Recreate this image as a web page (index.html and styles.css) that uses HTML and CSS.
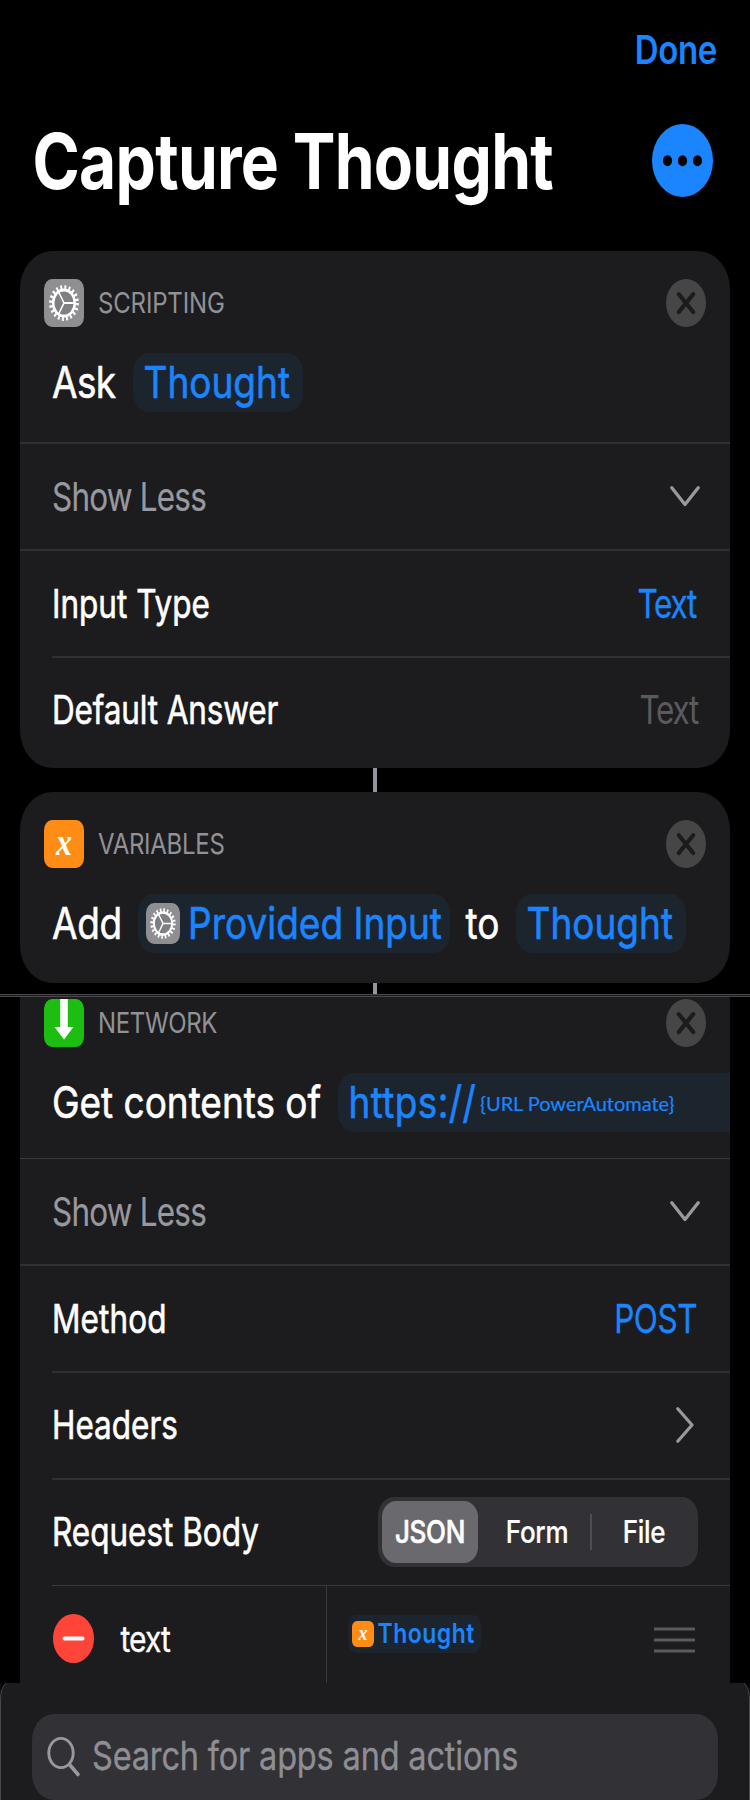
FILE: index.html
```html
<!DOCTYPE html>
<html lang="en">
<head>
<meta charset="utf-8">
<title>Capture Thought</title>
<link rel="stylesheet" href="styles.css">
</head>
<body>
<svg class="defs" width="0" height="0">
  <symbol id="gear" viewBox="0 0 40 40" preserveAspectRatio="none">
    <g fill="none" stroke="#fff">
      <circle cx="20" cy="20" r="10.8" stroke-width="2.4" fill="#7e7e83"/>
      <circle cx="20" cy="20" r="13.2" stroke-width="3.4" stroke-dasharray="1.9 2.247"/>
      <path d="M20 20H30.500M20 20L14.700 10.900M20 20L14.700 29.100" stroke-width="1.500"/>
    </g>
  </symbol>
  <symbol id="close" viewBox="0 0 40 48">
    <ellipse cx="20" cy="24" rx="20" ry="24" fill="#464646"/>
    <path d="M12.800 15.200L27.200 33M27.200 15.200L12.800 33" stroke="#1c1c1e" stroke-width="4.200" stroke-linecap="round"/>
  </symbol>
  <symbol id="down" viewBox="0 0 30 21">
    <path d="M1.800 1.800L15 18.500L28.200 1.800" fill="none" stroke="#98989e" stroke-width="3.300" stroke-linecap="round" stroke-linejoin="round"/>
  </symbol>
</svg>
<div class="screen">
  <div class="nav"><span class="t done">Done</span></div>
  <div class="heading">
    <h1 class="t title">Capture Thought</h1>
    <svg class="more" viewBox="0 0 61 73"><ellipse cx="30.500" cy="36.500" rx="30.500" ry="36.500" fill="#1a85ff"/><g fill="#000"><ellipse cx="15.500" cy="36.700" rx="4.600" ry="5.500"/><ellipse cx="30.500" cy="36.700" rx="4.600" ry="5.500"/><ellipse cx="45.500" cy="36.700" rx="4.600" ry="5.500"/></g></svg>
  </div>

  <section class="card first">
    <header class="head">
      <span class="icon gray"><svg><use href="#gear"/></svg></span>
      <span class="t cat">SCRIPTING</span>
      <svg class="close"><use href="#close"/></svg>
    </header>
    <div class="action">
      <span class="t ask">Ask</span>
      <span class="pill pill-ask"><span class="t thought">Thought</span></span>
    </div>
    <div class="row"><span class="t label muted show">Show Less</span><svg class="down"><use href="#down"/></svg></div>
    <div class="row"><span class="t label">Input Type</span><span class="t label value vtext">Text</span></div>
    <div class="row inset last"><span class="t label answer">Default Answer</span><span class="t label value vtext placeholder">Text</span></div>
  </section>
  <div class="link"></div>
  <section class="card second">
    <header class="head">
      <span class="icon orange"><span class="t x">x</span></span>
      <span class="t cat vars">VARIABLES</span>
      <svg class="close"><use href="#close"/></svg>
    </header>
    <div class="action">
      <span class="t add">Add</span>
      <span class="pill pill-input"><span class="mini gray"><svg><use href="#gear"/></svg></span><span class="t">Provided Input</span></span>
      <span class="t to">to</span>
      <span class="pill pill-thought"><span class="t thought">Thought</span></span>
    </div>
  </section>
  <div class="link short"></div>
  <div class="seam"></div>
  <section class="card third">
    <header class="head">
      <span class="icon green"><svg viewBox="0 0 40 48"><path d="M16.200 0H23.800V28H29.500L20 40.500L10.500 28H16.200Z" fill="#fff"/></svg></span>
      <span class="t cat net">NETWORK</span>
      <svg class="close"><use href="#close"/></svg>
    </header>
    <div class="action">
      <span class="t get">Get contents of</span>
      <span class="pill pill-url"><span class="t https">https://</span><span class="url">{URL PowerAutomate}</span></span>
    </div>
    <div class="row thin"><span class="t label muted show">Show Less</span><svg class="down"><use href="#down"/></svg></div>
    <div class="row"><span class="t label method">Method</span><span class="t label value post">POST</span></div>
    <div class="row inset raised"><span class="t label">Headers</span><svg class="right" viewBox="0 0 18 36"><path d="M1.800 1.800L16 18L1.800 34.200" fill="none" stroke="#98989e" stroke-width="3.200" stroke-linecap="round" stroke-linejoin="round"/></svg></div>
    <div class="row inset raised"><span class="t label">Request Body</span>
      <div class="segments"><span class="seg on"><span class="t">JSON</span></span><span class="seg form"><span class="t">Form</span></span><i class="split"></i><span class="seg file"><span class="t">File</span></span></div>
    </div>
    <div class="row inset thin field">
      <div class="key"><svg class="minus" viewBox="0 0 41 49"><ellipse cx="20.500" cy="24.500" rx="20.500" ry="24.500" fill="#ff453a"/><path d="M11.500 24.500H29.500" stroke="#fff" stroke-width="4" stroke-linecap="round"/></svg><span class="t keyname">text</span></div>
      <div class="val"><span class="token"><span class="tiny orange"><span class="t x">x</span></span><span class="t token-name">Thought</span></span>
        <svg class="grip" viewBox="0 0 41 26"><path d="M1 2H40M1 13H40M1 24H40" stroke="#5b5b5e" stroke-width="3" stroke-linecap="round"/></svg></div>
    </div>
  </section>
  <footer class="sheet">
    <svg class="edge" viewBox="0 0 750 117"><path d="M0 0H6Q.5 5 .5 17V0Z" fill="#000"/><path d="M750 0H744Q749.500 5 749.500 17V0Z" fill="#000"/><path d="M6 0Q.5 5 .5 17V117M744 0Q749.500 5 749.500 17V117" fill="none" stroke="#48484a"/></svg>
    <div class="search"><svg class="lens" viewBox="0 0 34 42"><g fill="none" stroke="#98989f" stroke-linecap="round"><ellipse cx="14" cy="17" rx="12.200" ry="14.600" stroke-width="2.900"/><path d="M22.500 28.500L31 38.500" stroke-width="3.600"/></g></svg><span class="t hint">Search for apps and actions</span></div>
  </footer>
</div>
</body>
</html>
```
FILE: styles.css
```css
* { box-sizing: border-box; }
body { margin: 0; background: #000; }
.defs { position: absolute; }
svg { display: block; flex: none; }
.screen {
  width: 750px; height: 1800px; overflow: hidden;
  display: flex; flex-direction: column;
  font-family: Inter, "Liberation Sans", sans-serif;
  background: #000; color: #fff;
}
/* Tall type: every label is stretched vertically around its centre. */
.t { display: inline-block; flex: none; transform: scaleY(1.2); white-space: nowrap; line-height: 1.2; }

.nav { height: 98px; display: flex; align-items: center; justify-content: flex-end; padding: 3px 33px 0 0; }
.done { color: #1a85ff; font-size: 33px; font-weight: 600; letter-spacing: -.35px; }
.heading { height: 153px; display: flex; justify-content: space-between; align-items: flex-start; padding: 26px 37px 0 32.500px; }
.title { margin: -1px 0 0; font-size: 64px; line-height: 76px; font-weight: 700; letter-spacing: -.72px; }
.more { width: 61px; height: 73px; }

.card { width: 710px; margin: 0 20px; background: #1c1c1e; flex: none; overflow: hidden; }
.first { height: 517px; border-radius: 32px / 38px; }
.second { height: 191px; border-radius: 32px / 38px; }
.third { height: 686px; }
.head { display: flex; align-items: center; padding: 28px 24px 0; }
.third .head { padding-top: 2px; }
.icon { width: 40px; height: 48px; border-radius: 8px / 10px; display: flex; align-items: center; justify-content: center; flex: none; }
.icon svg { width: 40px; height: 48px; }
.gray { background: #8e8e93; }
.orange { background: #ff8c14; }
.green { background: #1dbe12; }
.x { font: italic bold 32px/1 "Liberation Serif", serif; }
.icon .x { margin-top: -5px; }
.cat { margin-left: 14px; color: #929296; font-size: 24px; letter-spacing: -.16px; }
.vars { letter-spacing: -.28px; }
.net { letter-spacing: -.36px; }
.close { width: 40px; height: 48px; margin-left: auto; }

.action { display: flex; align-items: center; height: 59px; margin: 26px 0 30px; padding-left: 32px; font-size: 37px; -webkit-text-stroke: .5px; }
.third .action { margin-bottom: 26px; }
.pill { display: flex; align-items: center; flex: none; height: 59px; border-radius: 16px / 19px; background: #1c242e; color: #1a85ff; }
.ask { width: 81px; letter-spacing: -.6px; }
.pill-ask { width: 170px; padding-left: 10.500px; }
.add { width: 86px; letter-spacing: -.4px; }
.pill-input { width: 312px; padding-left: 8px; }
.mini { width: 34px; height: 41px; border-radius: 8px / 10px; margin-right: 8px; overflow: hidden; }
.mini svg { width: 34px; height: 41px; }
.to { width: 66px; padding-left: 15.500px; }
.pill-thought { width: 170px; padding-left: 10.500px; }
.get { width: 285.500px; letter-spacing: -.03px; }
.pill-url { width: 420px; padding-left: 11px; }
.https { letter-spacing: .37px; width: 131px; }
.url { font: 20px/24px Lato, sans-serif; letter-spacing: -.05px; margin-top: 1px; margin-left: .5px; white-space: nowrap; -webkit-text-stroke: .2px; }

.row { height: 107px; border-top: 2px solid #303032; display: flex; align-items: center; justify-content: space-between; padding: 0 32px; }
.inset { margin-left: 32px; padding-left: 0; }
.thin { height: 106px; border-top: 1px solid #3a3a3c; }
.last { height: 112px; padding-bottom: 7px; }
.raised { padding-bottom: 2px; }
.label { font-size: 31.500px; transform: scaleY(1.26); -webkit-text-stroke: .5px; }
.muted { color: #98989f; -webkit-text-stroke: .15px; }
.show { letter-spacing: -.8px; }
.answer { letter-spacing: -.15px; }
.method { letter-spacing: .1px; }
.value { color: #1a85ff; -webkit-text-stroke: .25px; }
.vtext { letter-spacing: -1.300px; margin-right: 2px; }
.post { letter-spacing: -.5px; margin-right: 1px; }
.placeholder { color: #5a5a5e; margin-right: 0; -webkit-text-stroke: 0; }
.down { width: 30px; height: 21px; margin-right: -2px; }
.right { width: 18px; height: 36px; margin-right: 4px; }

.segments { width: 320px; height: 70px; border-radius: 16px / 19px; background: #313136; padding: 4px; display: flex; align-items: center; font-size: 26px; font-weight: 500; letter-spacing: -.3px; }
.seg { height: 62px; display: flex; align-items: center; justify-content: center; -webkit-text-stroke: .2px; }
.on { width: 96px; border-radius: 14px / 16px; background: #69696e; -webkit-text-stroke: .5px; }
.form { width: 112px; padding-left: 6px; }
.split { width: 2px; height: 36px; background: #4e4e53; }
.file { flex: 1; padding-left: 2px; }
.field { height: 98px; align-items: stretch; justify-content: flex-start; padding: 0; }
.key { width: 275px; border-right: 1px solid #3a3a3c; display: flex; align-items: center; padding: 8px 0 0 1px; }
.minus { width: 41px; height: 49px; }
.keyname { font-size: 30px; letter-spacing: -.9px; margin: 0 0 0 26.500px; -webkit-text-stroke: .3px; }
.val { flex: 1; display: flex; align-items: flex-start; padding: 29px 34px 0 21px; }
.token { width: 133px; height: 38px; border-radius: 8px / 10px; background: #1c242e; display: flex; align-items: center; padding-left: 4px; }
.tiny { width: 22px; height: 26px; border-radius: 5px / 6px; display: flex; align-items: center; justify-content: center; }
.tiny .x { font-size: 18px; margin-top: -3px; }
.token-name { color: #1a85ff; font-size: 23px; font-weight: 600; letter-spacing: .5px; margin: 2px 0 0 3.500px; }
.grip { width: 41px; height: 26px; margin: 12px 1px 0 auto; }

.link { width: 4px; height: 24px; background: #94949b; margin: 0 auto; flex: none; }
.short { height: 11px; }
.seam { height: 3px; flex: none; border-top: 1px solid #48484a; border-bottom: 1px solid #48484a; background: #1c1c1e; }

.sheet { position: relative; height: 117px; flex: none; background: #1c1c1e; padding: 31px 32px 0; }
.edge { position: absolute; left: 0; top: 0; width: 750px; height: 117px; }
.search { position: relative; width: 686px; height: 86px; border-radius: 22px / 26px; background: #313136; display: flex; align-items: center; padding-left: 15px; }
.lens { width: 34px; height: 42px; }
.hint { font-size: 32.500px; letter-spacing: -.17px; color: #8e8e93; margin: -2px 0 0 11px; -webkit-text-stroke: .3px; }
```
